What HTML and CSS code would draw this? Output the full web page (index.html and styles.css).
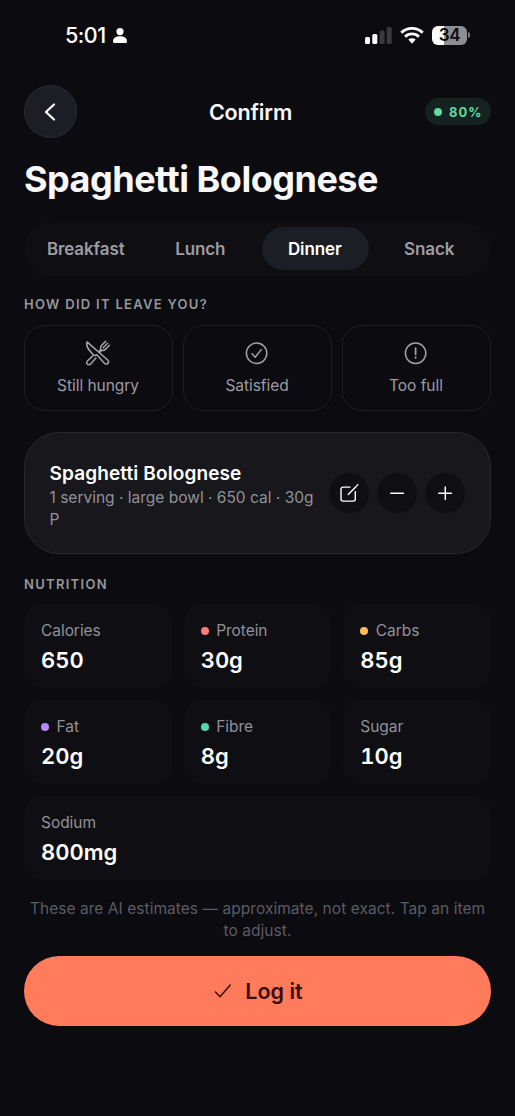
FILE: index.html
```html
<!DOCTYPE html>
<html lang="en">
<head>
<meta charset="utf-8">
<title>Confirm</title>
<link rel="stylesheet" href="styles.css">
</head>
<body>
<div class="screen">
  <div class="status">
    <div class="status-left">
      <span class="time">5:01</span>
      <svg class="person" width="14" height="15" viewBox="0 0 14 15" fill="#fff"><circle cx="7" cy="3.6" r="3.6"/><path d="M0 13.2C0 10.2 3 8.3 7 8.3s7 1.9 7 4.9c0 1.2-.5 1.8-1.600 1.800H1.600C.5 15 0 14.400 0 13.200Z"/></svg>
    </div>
    <div class="status-right">
      <svg width="27" height="17" viewBox="0 0 27 17"><rect x="0" y="10" width="5" height="7" rx="1.500" fill="#fff"/><rect x="7.300" y="7" width="5" height="10" rx="1.500" fill="#fff"/><rect x="14.600" y="3.500" width="5" height="13.500" rx="1.500" fill="#3a3a3e"/><rect x="21.700" y="0" width="5" height="17" rx="1.500" fill="#3a3a3e"/></svg>
      <svg class="wifi" width="24" height="17" viewBox="0 0 24 17" fill="none" stroke="#fff" stroke-width="2.900"><path d="M1.300 5.800a15.200 15.200 0 0 1 21.400 0"/><path d="M5.100 9.700a9.800 9.800 0 0 1 13.800 0"/><path d="M8.300 12.600L12 16.700l3.700-4.100a5.400 5.400 0 0 0-7.400 0Z" fill="#fff" stroke="none"/></svg>
      <div class="battery"><div class="battery-body">34</div><i class="battery-cap"></i></div>
    </div>
  </div>

  <header class="header">
    <button class="back" aria-label="Back"><svg width="12" height="18" viewBox="0 0 12 18" fill="none" stroke="#fff" stroke-width="2.200" stroke-linecap="round" stroke-linejoin="round"><path d="M10 1.500 2 9l8 7.500"/></svg></button>
    <div class="header-title">Confirm</div>
    <div class="confidence"><i class="dot"></i><span>80%</span></div>
  </header>

  <h1 class="title">Spaghetti Bolognese</h1>

  <nav class="tabs">
    <span class="tab">Breakfast</span><span class="tab">Lunch</span><span class="tab active">Dinner</span><span class="tab">Snack</span>
  </nav>

  <h2 class="section feel">HOW DID IT LEAVE YOU?</h2>
  <div class="choices">
    <div class="choice">
      <svg width="26" height="26" viewBox="0 0 26 26" fill="none" stroke="#a3a3a8" stroke-width="1.500" stroke-linecap="round" stroke-linejoin="round"><path d="M2 1.900C1.100 5 2.500 8.600 5.500 11.600l3.200 3.300c.9.900 1.700.5 2.400.1.500-.3 1 0 1.400.5l6.900 7.700c1.100 1.200 2.700 1.100 3.500.2.900-.9.900-2.300-.2-3.400Z"/><path d="M7.800 15.900l-5.200 4.800c-1.200 1.100-1.100 2.500-.3 3.300.9.900 2.400.9 3.400-.1l5.200-5.800"/><path d="M20.600 1.400l-4.100 4.100c-1.200 1.200-1.200 2.500-.8 3.900l-1.500 1.600M24.500 5.300l-4.100 4.100c-1.200 1.200-2.500 1.200-3.900.8L15.200 12M22.600 3.300l-4.400 4.500"/></svg>
      <span>Still hungry</span>
    </div>
    <div class="choice">
      <svg width="26" height="26" viewBox="0 0 26 26" fill="none" stroke="#a3a3a8" stroke-width="1.500" stroke-linecap="round" stroke-linejoin="round"><circle cx="12.600" cy="13.200" r="10.200"/><path d="M8 13.800l3.200 3.400 6-7.600"/></svg>
      <span>Satisfied</span>
    </div>
    <div class="choice">
      <svg width="26" height="26" viewBox="0 0 26 26" fill="none" stroke="#a3a3a8" stroke-width="1.500" stroke-linecap="round"><circle cx="12.600" cy="13.200" r="10.200"/><path d="M12.600 8.200v6.200" stroke-width="1.700"/><circle cx="12.600" cy="17.600" r="1.100" fill="#a3a3a8" stroke="none"/></svg>
      <span>Too full</span>
    </div>
  </div>

  <section class="item">
    <div class="item-text">
      <div class="item-name">Spaghetti Bolognese</div>
      <div class="item-detail">1 serving · large bowl · 650 cal · 30g P</div>
    </div>
    <div class="item-actions">
      <button class="round" aria-label="Edit"><svg width="20" height="20" viewBox="0 0 20 20" fill="none" stroke="#fff" stroke-width="1.400" stroke-linecap="round" stroke-linejoin="round"><path d="M11 4.100H4A2 2 0 0 0 2 6.100v10a2 2 0 0 0 2 2h10.300a2 2 0 0 0 2-2V8.800M9.200 11.500l8.200-8.300M18.400 2.200l.4-.4"/></svg></button>
      <button class="round" aria-label="Less"><svg width="20" height="20" viewBox="0 0 20 20" stroke="#fff" stroke-width="1.500" stroke-linecap="round"><path d="M3.800 10.300h12.600"/></svg></button>
      <button class="round" aria-label="More"><svg width="20" height="20" viewBox="0 0 20 20" stroke="#fff" stroke-width="1.500" stroke-linecap="round"><path d="M3.800 10.300h12.600M10.300 4v12.600"/></svg></button>
    </div>
  </section>

  <h2 class="section nutrition">NUTRITION</h2>
  <div class="grid">
    <div class="cell"><div class="label">Calories</div><div class="value">650</div></div>
    <div class="cell"><div class="label"><i class="dot protein"></i>Protein</div><div class="value">30g</div></div>
    <div class="cell"><div class="label"><i class="dot carbs"></i>Carbs</div><div class="value">85g</div></div>
    <div class="cell"><div class="label"><i class="dot fat"></i>Fat</div><div class="value">20g</div></div>
    <div class="cell"><div class="label"><i class="dot fibre"></i>Fibre</div><div class="value">8g</div></div>
    <div class="cell"><div class="label">Sugar</div><div class="value">10g</div></div>
    <div class="cell wide"><div class="label">Sodium</div><div class="value">800mg</div></div>
  </div>

  <p class="note">These are AI estimates — approximate, not exact. Tap an item to adjust.</p>
  <button class="log"><svg width="18" height="16" viewBox="0 0 18 16" fill="none" stroke="#380b04" stroke-width="1.400" stroke-linecap="round" stroke-linejoin="round"><path d="M1.500 9l4.500 4.800L16.300 2"/></svg><span>Log it</span></button>
</div>
</body>
</html>
```
FILE: styles.css
```css
* { box-sizing: border-box; }
body {
  margin: 0;
  background: #0b0b10;
  color: #fff;
  font-family: Inter, "Liberation Sans", sans-serif;
  font-optical-sizing: none;
}
button { border: 0; padding: 0; margin: 0; color: inherit; font: inherit; }
svg { display: block; flex: none; }
.screen { width: 515px; height: 1116px; padding: 0 24px; overflow: hidden; }

.status { height: 85px; padding: 23px 21px 0 41px; display: flex; justify-content: space-between; align-items: flex-start; }
.status-left { display: flex; align-items: center; gap: 7px; height: 25px; }
.time { font-size: 21.500px; line-height: 24px; padding-bottom: 2px; font-weight: 550; letter-spacing: -0.5px; }
.status-right { display: flex; align-items: center; height: 24px; }
.wifi { margin-left: 8px; }
.battery { display: flex; align-items: center; gap: 1px; margin-left: 8px; }
.battery-body { width: 35px; height: 19px; border-radius: 6px; background: linear-gradient(90deg, #fff 34%, #8e8e92 34%); color: #0b0b10; font-size: 17px; line-height: 19px; font-weight: 600; letter-spacing: -0.2px; text-align: center; }
.battery-cap { width: 2px; height: 6px; border-radius: 0 2px 2px 0; background: #77777b; }

.header { height: 53px; display: grid; grid-template-columns: 53px 1fr 66px; align-items: center; }
.back { width: 53px; height: 53px; border-radius: 50%; background: #1c1d25; border: 1px solid #2c2c32; display: grid; place-items: center; }
.back svg { margin-right: 1px; }
.header-title { padding-right: 1px; text-align: center; font-size: 21.500px; font-weight: 600; letter-spacing: -0.150px; color: #f8f8fb; }
.confidence { width: 66px; height: 27px; border-radius: 14px; background: #14231f; color: #62d9a2; display: flex; align-items: center; gap: 7px; padding-left: 9px; font-size: 13px; font-weight: 650; letter-spacing: 1px; }
.dot { width: 8px; height: 8px; border-radius: 50%; background: #62d9a2; flex: none; }
.title { margin: 19px 0 0; height: 45px; line-height: 45px; font-size: 36px; font-weight: 700; letter-spacing: -0.5px; color: #f8f8fb; white-space: nowrap; }

.tabs { margin-top: 20px; height: 54px; padding: 5px 7.500px 6px 8.500px; border-radius: 27px; background: #0f0f13; display: grid; grid-template-columns: repeat(4, 1fr); gap: 7px; }
.tab { display: grid; place-items: center; border-radius: 22px; padding-right: 1px; font-size: 17px; line-height: 20px; font-weight: 570; letter-spacing: -0.100px; color: #9c9ca3; }
.active { background: #1c1e26; color: #fff; }

.section { margin: 0; font-size: 13px; line-height: 18px; font-weight: 620; letter-spacing: 1.300px; color: #96969d; }
.feel { margin-top: 19px; }
.choices { margin-top: 12px; display: grid; grid-template-columns: repeat(3, 1fr); gap: 10px; }
.choice { height: 86px; border: 1px solid #1f1f24; border-radius: 20px; display: flex; flex-direction: column; align-items: center; padding: 14px 1px 0 0; gap: 9px; font-size: 15.500px; line-height: 22px; letter-spacing: -0.05px; color: #9c9ca3; }

.item { margin-top: 21px; height: 122px; border: 1px solid #28282d; border-radius: 35px; background: #17171c; padding: 0 25px 0 24.500px; display: flex; align-items: center; justify-content: space-between; }
.item-text { width: 272px; padding-top: 4px; }
.item-name { font-size: 19px; line-height: 27px; font-weight: 600; letter-spacing: 0.120px; }
.item-detail { font-size: 15.500px; line-height: 22px; color: #919198; }
.item-actions { display: flex; gap: 8px; }
.round { width: 40px; height: 40px; border-radius: 50%; background: #0f0f13; display: grid; place-items: center; }

.nutrition { margin-top: 21px; }
.grid { margin-top: 11px; display: grid; grid-template-columns: repeat(3, 1fr); gap: 12px; }
.cell { height: 84px; border-radius: 18px; background: #0f0f13; padding: 16px 17px 0; }
.wide { grid-column: 1 / -1; }
.label { display: flex; align-items: center; gap: 7.500px; font-size: 15.500px; line-height: 22px; letter-spacing: -0.05px; color: #919198; }
.value { margin-top: 3px; font-size: 22px; line-height: 30px; font-weight: 600; font-variant-numeric: tabular-nums; }
.protein { background: #fb7b7b; }
.carbs { background: #fdbc5c; }
.fat { background: #b68cfc; }
.fibre { background: #55d6ae; }

.note { margin: 18px 0 0; font-size: 15.500px; line-height: 21.500px; letter-spacing: 0.05px; text-align: center; color: #5c5c64; }
.log { margin-top: 15px; width: 467px; height: 70px; border-radius: 35px; background: #ff7b5c; color: #380b04; display: flex; align-items: center; justify-content: center; gap: 13px; padding-left: 2px; font-size: 21.500px; font-weight: 600; }
```
